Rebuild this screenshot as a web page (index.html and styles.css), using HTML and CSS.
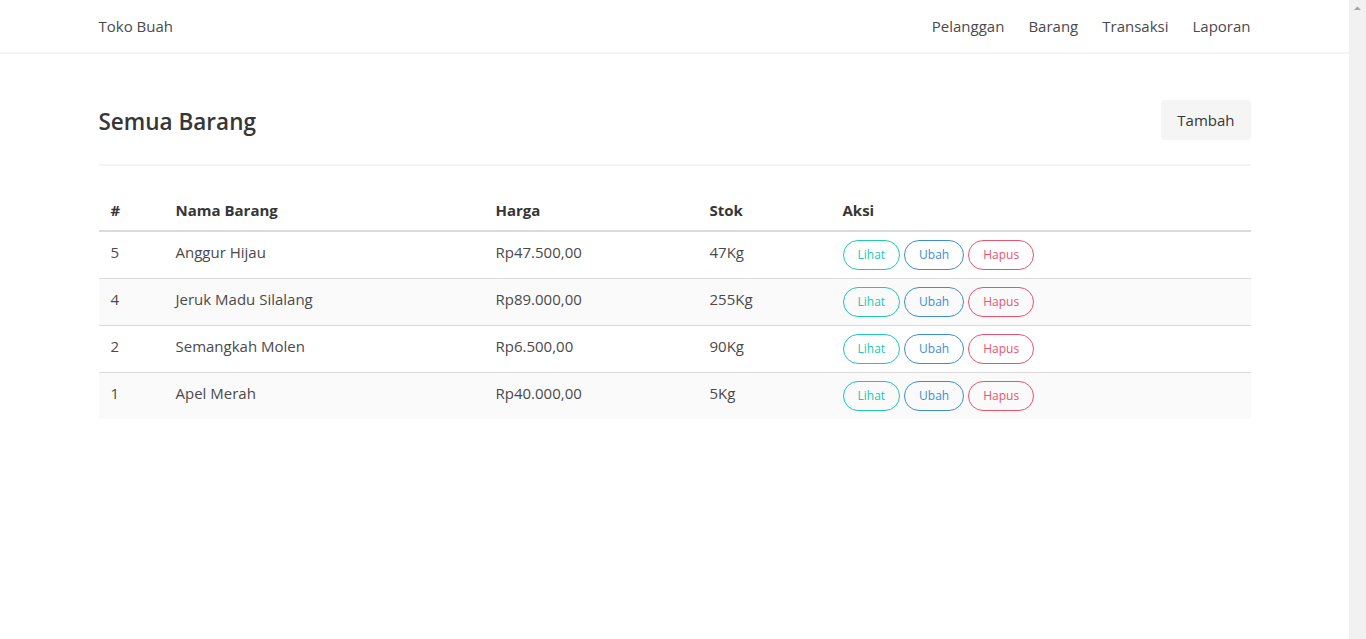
FILE: index.html
```html
<!DOCTYPE html>
<html lang="id">
<head>
<meta charset="utf-8">
<title>Toko Buah</title>
<link rel="stylesheet" href="styles.css">
</head>
<body>
<div class="page">
  <nav class="navbar">
    <div class="container nav-inner">
      <a class="nav-brand" href="#">Toko Buah</a>
      <div class="nav-end">
        <a class="nav-item" href="#">Pelanggan</a>
        <a class="nav-item" href="#">Barang</a>
        <a class="nav-item" href="#">Transaksi</a>
        <a class="nav-item" href="#">Laporan</a>
      </div>
    </div>
  </nav>
  <section class="section">
    <div class="container">
      <div class="level">
        <h1 class="title">Semua Barang</h1>
        <a class="btn-light" href="#">Tambah</a>
      </div>
      <hr class="divider">
      <table class="table">
        <colgroup>
          <col class="c1"><col class="c2"><col class="c3"><col class="c4"><col class="c5">
        </colgroup>
        <thead>
          <tr><th>#</th><th>Nama Barang</th><th>Harga</th><th>Stok</th><th>Aksi</th></tr>
        </thead>
        <tbody>
          <tr><td>5</td><td>Anggur Hijau</td><td>Rp47.500,00</td><td>47Kg</td><td><div class="actions"><a class="pill pill-primary" href="#">Lihat</a><a class="pill pill-info" href="#">Ubah</a><a class="pill pill-danger" href="#">Hapus</a></div></td></tr>
          <tr><td>4</td><td>Jeruk Madu Silalang</td><td>Rp89.000,00</td><td>255Kg</td><td><div class="actions"><a class="pill pill-primary" href="#">Lihat</a><a class="pill pill-info" href="#">Ubah</a><a class="pill pill-danger" href="#">Hapus</a></div></td></tr>
          <tr><td>2</td><td>Semangkah Molen</td><td>Rp6.500,00</td><td>90Kg</td><td><div class="actions"><a class="pill pill-primary" href="#">Lihat</a><a class="pill pill-info" href="#">Ubah</a><a class="pill pill-danger" href="#">Hapus</a></div></td></tr>
          <tr><td>1</td><td>Apel Merah</td><td>Rp40.000,00</td><td>5Kg</td><td><div class="actions"><a class="pill pill-primary" href="#">Lihat</a><a class="pill pill-info" href="#">Ubah</a><a class="pill pill-danger" href="#">Hapus</a></div></td></tr>
        </tbody>
      </table>
    </div>
  </section>
</div>
<div class="scrollbar" aria-hidden="true">
  <svg class="scroll-arrow" width="17" height="17" viewBox="0 0 17 17"><path d="M5 10 L8.5 6.5 L12 10 Z" fill="#a3a3a3"/></svg>
</div>
</body>
</html>
```
FILE: styles.css
```css
html {
  background: #fff;
}
body {
  margin: 0;
  font-family: "Open Sans", "Noto Sans", sans-serif;
  font-size: 15px;
  line-height: 24px;
  color: #4a4a4a;
}
a { text-decoration: none; color: inherit; }
.page {
  margin-right: 17px;
}
.scrollbar {
  position: fixed;
  top: 0;
  right: 0;
  bottom: 0;
  width: 17px;
  background: #f1f1f1;
}
.scroll-arrow { display: block; }
.container {
  width: 1152px;
  margin: 0 auto;
}
.navbar {
  height: 52px;
  background: #fff;
  box-shadow: 0 2px 0 0 #f5f5f5;
}
.nav-inner {
  display: flex;
  align-items: stretch;
  justify-content: space-between;
  height: 52px;
}
.nav-brand, .nav-item {
  display: flex;
  align-items: center;
  padding: 0 12px;
  color: #4a4a4a;
}
.nav-brand { margin-left: -12px; }
.nav-end { display: flex; margin-right: -12px; }
.section { padding: 48px 24px; }
.level {
  display: flex;
  justify-content: space-between;
  align-items: center;
}
.title {
  margin: 2px 0 0;
  font-size: 22.5px;
  font-weight: 600;
  line-height: 1.2;
  color: #363636;
}
.btn-light {
  display: inline-flex;
  align-items: center;
  height: 40px;
  box-sizing: border-box;
  padding: 0 16px;
  background: #f5f5f5;
  border-radius: 4px;
  color: #363636;
}
.divider {
  border: none;
  height: 2px;
  background: #f5f5f5;
  margin: 24px 0;
}
.table {
  width: 100%;
  border-collapse: collapse;
  color: #4a4a4a;
}
.c1 { width: 65px; }
.c2 { width: 320px; }
.c3 { width: 214px; }
.c4 { width: 133px; }
.table th, .table td {
  padding: 8px 12px;
  text-align: left;
  vertical-align: top;
  border-bottom: 1px solid #dbdbdb;
}
.table th {
  color: #363636;
  font-weight: 700;
  border-bottom-width: 2px;
}
.table tbody tr:last-child td { border-bottom: none; }
.table tbody tr:nth-child(even) { background: #fafafa; }
.actions { display: flex; gap: 4px; }
.pill {
  display: inline-flex;
  align-items: center;
  height: 30px;
  box-sizing: border-box;
  padding: 0 14px;
  border: 1px solid;
  border-radius: 290486px;
  font-size: 12px;
  background: transparent;
}
.pill-primary { color: #1fc8ae; border-color: #1fc8ae; }
.pill-info { color: #3e8ed0; border-color: #3e8ed0; }
.pill-danger { color: #e8546f; border-color: #e8546f; }
```
